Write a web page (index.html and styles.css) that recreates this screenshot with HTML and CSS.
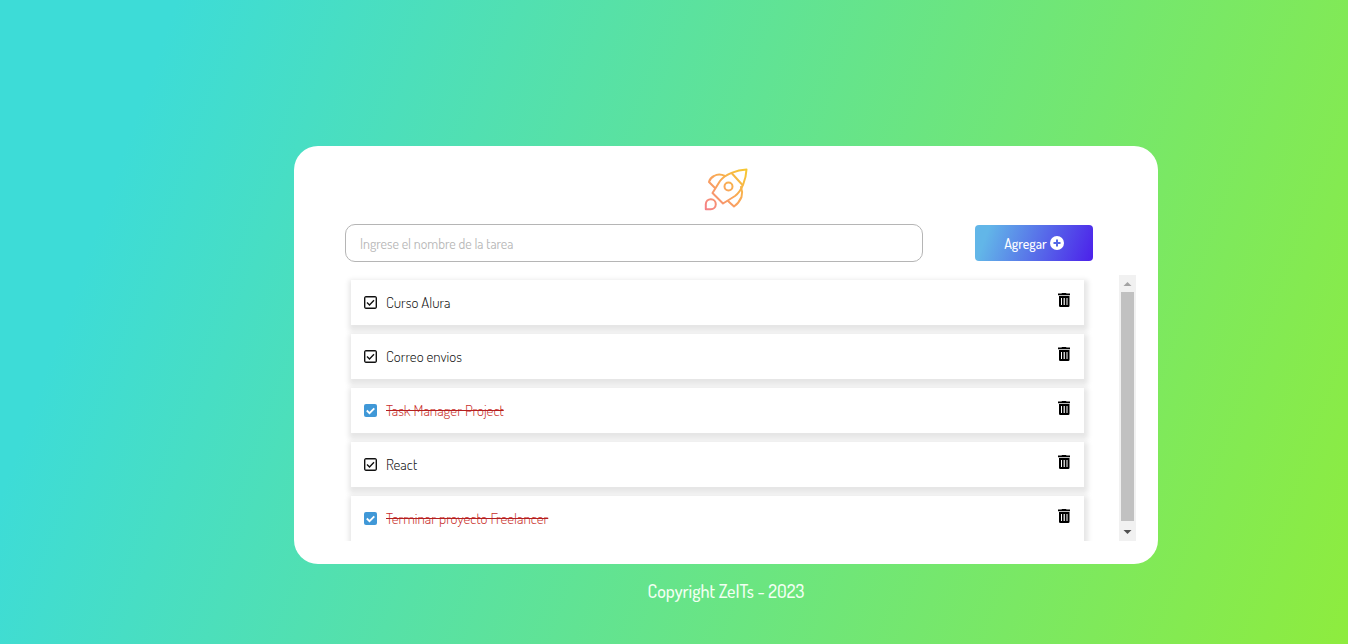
FILE: index.html
```html
<!DOCTYPE html>
<html lang="es">
<head>
<meta charset="utf-8">
<meta name="viewport" content="width=device-width, initial-scale=1">
<title>Tareas</title>
<link rel="stylesheet" href="styles.css">
</head>
<body>
<svg class="sprite" aria-hidden="true">
  <symbol id="trash" viewBox="0 0 14 16">
    <path fill-rule="evenodd" d="M4.500 1.500 5 1h4l.5.5H13v1.700H1V1.500zM2 4h10.500v9.700Q12.500 15 11.200 15H3.300Q2 15 2 13.700zM4 6v7h1V6zm2.600 0v7h1.200V6zM9.500 6v7h1V6z"/>
  </symbol>
</svg>
<div class="page">
  <main class="card">
    <svg class="logo" viewBox="0 0 44 44" role="img" aria-label="Cohete">
      <defs>
        <linearGradient id="flame" x1="0" y1="44" x2="44" y2="0" gradientUnits="userSpaceOnUse">
          <stop offset="0" stop-color="#f47c8c"/><stop offset=".45" stop-color="#f9a25e"/><stop offset="1" stop-color="#f6cb2e"/>
        </linearGradient>
      </defs>
      <g fill="none" stroke="url(#flame)" stroke-width="2" stroke-linejoin="round" stroke-linecap="round">
        <path d="M42.500 1.500C33 2 21 6 16 13L8.500 25 19 35.500 31 28C38 23 42 11 42.500 1.500Z"/>
        <path d="M28 5.500 38.500 17M21 8Q15 5 10 8Q6 10 5 14L11 20M24 33 30 38.500Q35 35 37.500 29Q39 24 37 19"/>
        <circle cx="24.500" cy="18.500" r="4"/>
        <path d="M1.800 41.200V36A5 5 0 1 1 6.800 41.200Z"/>
      </g>
    </svg>
    <form class="task-form">
      <input class="task-input" type="text" placeholder="Ingrese el nombre de la tarea" aria-label="Nombre de la tarea">
      <button class="add" type="submit">Agregar
        <svg class="plus" viewBox="0 0 14 14" aria-hidden="true"><circle cx="7" cy="7" r="7" fill="#fff"/><path d="M7 3.500v7M3.500 7h7" stroke="#5368e6" stroke-width="2"/></svg>
      </button>
    </form>
    <div class="scroll-area">
      <ul class="tasks">
        <li class="task"><label class="task-label"><input class="check" type="checkbox"><span>Curso Alura</span></label><button class="delete" type="button" aria-label="Eliminar"><svg class="bin"><use href="#trash"/></svg></button></li>
        <li class="task"><label class="task-label"><input class="check" type="checkbox"><span>Correo envios</span></label><button class="delete" type="button" aria-label="Eliminar"><svg class="bin"><use href="#trash"/></svg></button></li>
        <li class="task"><label class="task-label"><input class="check" type="checkbox" checked><span>Task Manager Project</span></label><button class="delete" type="button" aria-label="Eliminar"><svg class="bin"><use href="#trash"/></svg></button></li>
        <li class="task"><label class="task-label"><input class="check" type="checkbox"><span>React</span></label><button class="delete" type="button" aria-label="Eliminar"><svg class="bin"><use href="#trash"/></svg></button></li>
        <li class="task"><label class="task-label"><input class="check" type="checkbox" checked><span>Terminar proyecto Freelancer</span></label><button class="delete" type="button" aria-label="Eliminar"><svg class="bin"><use href="#trash"/></svg></button></li>
      </ul>
      <div class="scrollbar" aria-hidden="true">
        <svg class="arrow" viewBox="0 0 17 17"><path d="M4.500 11 8.500 7l4 4z" fill="#a3a3a3"/></svg>
        <div class="thumb"></div>
        <svg class="arrow" viewBox="0 0 17 17"><path d="M4.500 6 8.500 10l4-4z" fill="#505050"/></svg>
      </div>
    </div>
  </main>
  <footer class="footer">Copyright ZeITs - 2023</footer>
</div>
</body>
</html>
```
FILE: styles.css
```css
* { box-sizing: border-box; }
body {
  margin: 0;
  min-height: 100vh;
  font-family: Dosis, Lato, sans-serif;
  font-size: 15px;
  background: linear-gradient(109.6deg, rgb(61, 220, 215) 11.2%, rgb(142, 236, 62) 100%);
}
.sprite { display: none; }
.page { padding: 146px 190px 40px 294px; }
.card {
  display: flex;
  flex-direction: column;
  padding: 22px 22px 23px;
  border-radius: 24px;
  background: #fff;
}
.logo { width: 44px; height: 44px; align-self: center; }
.task-form {
  display: flex;
  align-items: center;
  gap: 52px;
  padding: 12px 43px 0 29px;
}
.task-input {
  flex: 1;
  min-width: 0;
  height: 38px;
  padding: 0 14px;
  border: 1px solid #b5b5b5;
  border-radius: 10px;
  font: inherit;
  font-size: 14px;
  color: #333;
  outline: none;
}
.task-input::placeholder { color: #b8b8b8; }
.add {
  display: flex;
  align-items: center;
  justify-content: center;
  gap: 3px;
  width: 118px;
  height: 36px;
  padding: 0;
  border: 0;
  border-radius: 4px;
  font: inherit;
  font-size: 14px;
  font-weight: 500;
  color: #fff;
  background: linear-gradient(109.6deg, rgb(98, 182, 232) 11.2%, rgb(76, 32, 234) 100%);
}
.plus { width: 14px; height: 14px; }
.scroll-area {
  display: flex;
  height: 266px;
  margin-top: 13px;
}
.tasks {
  flex: 1;
  min-width: 0;
  margin: 0;
  padding: 5px 35px 0;
  overflow: hidden;
  list-style: none;
  display: flex;
  flex-direction: column;
  gap: 9px;
}
.scrollbar { display: flex; flex-direction: column; width: 17px; background: #f1f1f1; }
.arrow { flex: none; width: 17px; height: 17px; }
.thumb { flex: 1; margin: 0 2px 3px; background: #c1c1c1; }
.task {
  display: flex;
  flex: none;
  justify-content: space-between;
  height: 45px;
  padding: 0 13px;
  background: #fff;
  box-shadow: 1px 3px 5px 3px rgba(0, 0, 0, .1);
}
.task-label { display: flex; align-items: center; gap: 9px; font-weight: 300; color: #111; }
.check {
  appearance: none;
  width: 13px;
  height: 13px;
  margin: 0;
  border-radius: 2px;
  background: url("data:image/svg+xml,%3Csvg xmlns='http://www.w3.org/2000/svg' viewBox='0 0 13 13' fill='none' stroke='%23111' stroke-width='1.4'%3E%3Crect x='.7' y='.7' width='11.6' height='11.6' rx='.5'/%3E%3Cpath d='M3 6.500 5.500 9 10 4.300'/%3E%3C/svg%3E");
}
.check:checked { background: #4098d7 url("data:image/svg+xml,%3Csvg xmlns='http://www.w3.org/2000/svg' viewBox='0 0 13 13' fill='none' stroke='%23fff' stroke-width='1.800'%3E%3Cpath d='M2.800 6.500 5.500 9.200 10.300 4.300'/%3E%3C/svg%3E"); }
.check:checked + span { color: #c9302c; text-decoration: line-through; text-decoration-color: #b32020; }
.delete { display: flex; align-self: flex-start; margin-top: 12px; padding: 0; border: 0; background: none; color: #000; }
.bin { width: 14px; height: 16px; }
.footer { padding-top: 16px; text-align: center; font-size: 18px; font-weight: 500; line-height: 22px; color: #f2fff2; }
```
